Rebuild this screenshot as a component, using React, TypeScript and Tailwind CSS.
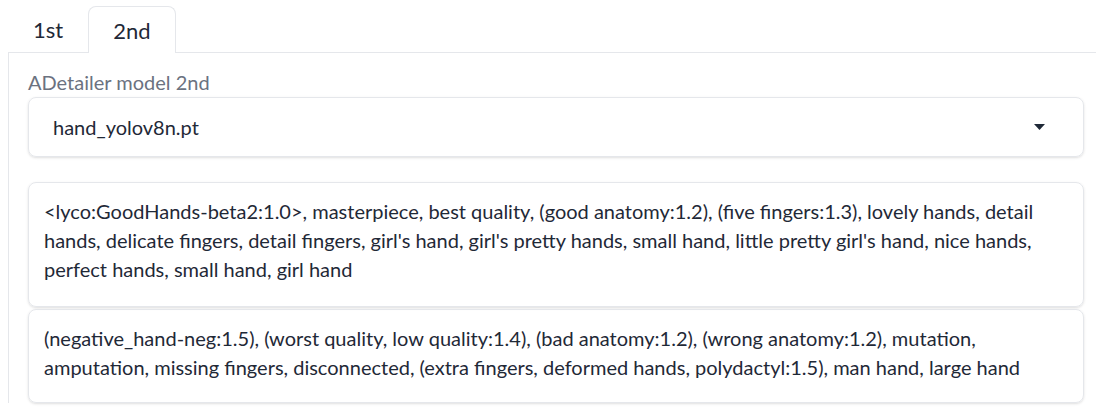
import React from "react";

const font = { fontFamily: '"Source Sans Pro", Lato, "Noto Sans", sans-serif' };

export default function App() {
  return (
    <div className="w-[1096px] h-[412px] bg-white overflow-hidden text-[#1f2937]" style={font}>
      <div className="flex items-end h-[53px] pt-[6px] pl-[8px]">
        <div className="h-[47px] w-[80px] flex items-center justify-center text-[22px] border-b border-[#e5e7eb]">1st</div>
        <div className="h-[47px] w-[88px] flex items-center justify-center text-[22px] border border-b-0 border-[#e5e7eb] rounded-t-[8px]">2nd</div>
        <div className="flex-1 h-[47px] border-b border-[#e5e7eb]"></div>
      </div>
      <div className="ml-[8px] border-l border-[#e5e7eb] pl-[19px] pr-[12px] pt-[17px]">
        <div className="text-[20px] text-[#6b7280] leading-[24px]">ADetailer model 2nd</div>
        <div className="mt-[3px] h-[60px] rounded-[8px] border border-[#e5e7eb] shadow-sm flex items-center justify-between pl-[24px] pr-[38px] text-[20px]">
          <span>hand_yolov8n.pt</span>
          <svg width="11" height="6" viewBox="0 0 11 6"><path d="M0 0H11L5.5 6Z" fill="#1f2937" /></svg>
        </div>
        <div className="mt-[25px] h-[125px] rounded-[8px] border border-[#e5e7eb] shadow-sm px-[15px] pt-[14px] text-[20px] leading-[29px]">
          &lt;lyco:GoodHands-beta2:1.0&gt;, masterpiece, best quality, (good anatomy:1.2), (five fingers:1.3), lovely hands, detail hands, delicate fingers, detail fingers, girl's hand, girl's pretty hands, small hand, little pretty girl's hand, nice hands, perfect hands, small hand, girl hand
        </div>
        <div className="mt-[2px] h-[94px] rounded-[8px] border border-[#e5e7eb] shadow-sm px-[15px] pt-[14px] text-[20px] leading-[29px]">
          (negative_hand-neg:1.5), (worst quality, low quality:1.4), (bad anatomy:1.2), (wrong anatomy:1.2), mutation, amputation, missing fingers, disconnected, (extra fingers, deformed hands, polydactyl:1.5), man hand, large hand
        </div>
      </div>
    </div>
  );
}
